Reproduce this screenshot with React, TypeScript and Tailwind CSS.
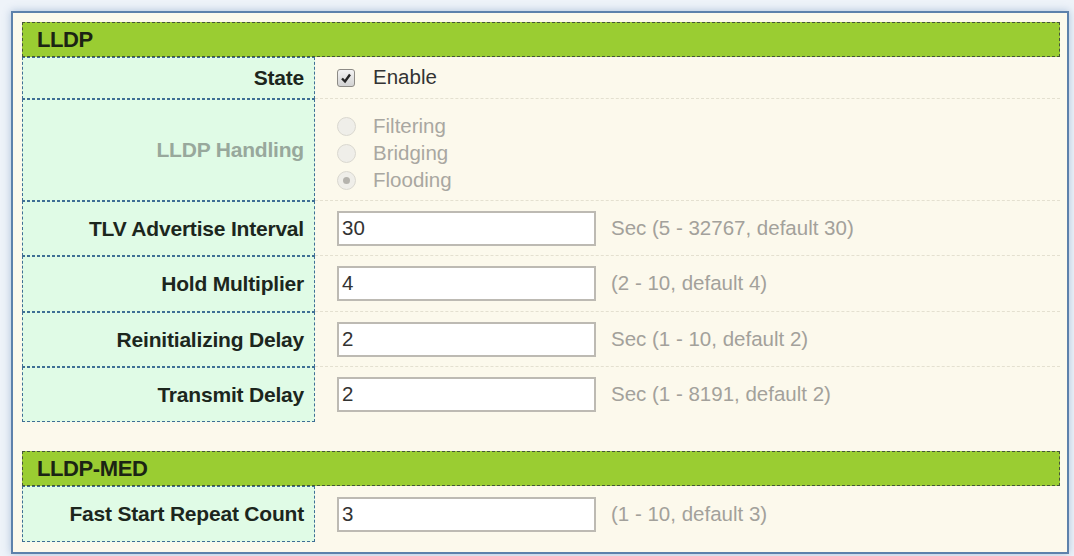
import React from "react"

const font = { fontFamily: '"Liberation Sans", Arial, sans-serif' }

function Header({ title }: { title: string }) {
  return (
    <div className="h-[35px] border border-dashed border-[#45563a] bg-[#9acd32] flex items-center pl-[14px]">
      <span className="text-[22px] font-bold text-[#1b2414] tracking-[-0.4px]">{title}</span>
    </div>
  )
}

function Row({
  label,
  disabled,
  h,
  last,
  children,
}: {
  label: string
  disabled?: boolean
  h: string
  last?: boolean
  children: React.ReactNode
}) {
  return (
    <div className={`flex ${h}`}>
      <div className="w-[293px] shrink-0 border border-dashed border-[#3f6f95] bg-[#e0fbe6] flex items-center justify-end pr-[10px]">
        <span
          className={`text-[21px] font-bold tracking-[-0.2px] ${disabled ? "text-[#98a89c]" : "text-[#1c261d]"}`}
        >
          {label}
        </span>
      </div>
      <div
        className={`flex-1 flex items-center pl-[22px] ${last ? "" : "border-b border-dashed border-[#e4e0d0]"}`}
      >
        {children}
      </div>
    </div>
  )
}

function Field({ value, hint }: { value: string; hint: string }) {
  return (
    <div className="flex items-center">
      <div className="w-[259px] h-[35px] border-2 border-[#bdbab3] bg-white flex items-center pl-[3px]">
        <span className="text-[20.5px] text-[#333]">{value}</span>
      </div>
      <span className="ml-[15px] text-[20.5px] text-[#a3a19b]">{hint}</span>
    </div>
  )
}

function Radio({ label, checked }: { label: string; checked?: boolean }) {
  return (
    <div className="flex items-center h-[27px]">
      <span className="w-[19px] h-[19px] rounded-full border border-[#dad8d0] bg-[#efeee9] flex items-center justify-center">
        {checked && <span className="w-[7px] h-[7px] rounded-full bg-[#b5b3ad]" />}
      </span>
      <span className="ml-[17px] text-[20.5px] text-[#a9a7a1]">{label}</span>
    </div>
  )
}

export default function App() {
  return (
    <div className="w-[1074px] h-[556px] bg-[#eef3f9] pt-[11px] pl-[11px] overflow-hidden" style={font}>
      <div className="w-[1058px] h-[543px] border-2 border-[#5d81ab] bg-[#fcf9ec] shadow-[0_0_8px_rgba(90,130,180,0.45)] pt-[9px] pl-[9px] pr-[7px]">
        <Header title="LLDP" />
        <Row label="State" h="h-[42px]">
          <div className="flex items-center">
            <span className="w-[18px] h-[18px] rounded-[3px] border border-[#8d8b86] bg-gradient-to-b from-[#f4f4f4] to-[#d2d2d2] flex items-center justify-center">
              <svg width="12" height="12" viewBox="0 0 12 12">
                <path d="M2 6.5 L5 9.5 L10 2.5" fill="none" stroke="#262626" strokeWidth="2.4" />
              </svg>
            </span>
            <span className="ml-[18px] text-[20.5px] text-[#333]">Enable</span>
          </div>
        </Row>
        <Row label="LLDP Handling" disabled h="h-[102px]">
          <div className="flex flex-col mt-[8px]">
            <Radio label="Filtering" />
            <Radio label="Bridging" />
            <Radio label="Flooding" checked />
          </div>
        </Row>
        <Row label="TLV Advertise Interval" h="h-[55px]">
          <Field value="30" hint="Sec (5 - 32767, default 30)" />
        </Row>
        <Row label="Hold Multiplier" h="h-[56px]">
          <Field value="4" hint="(2 - 10, default 4)" />
        </Row>
        <Row label="Reinitializing Delay" h="h-[55px]">
          <Field value="2" hint="Sec (1 - 10, default 2)" />
        </Row>
        <Row label="Transmit Delay" h="h-[55px]" last>
          <Field value="2" hint="Sec (1 - 8191, default 2)" />
        </Row>
        <div className="h-[29px]" />
        <Header title="LLDP-MED" />
        <Row label="Fast Start Repeat Count" h="h-[56px]" last>
          <Field value="3" hint="(1 - 10, default 3)" />
        </Row>
      </div>
    </div>
  )
}
